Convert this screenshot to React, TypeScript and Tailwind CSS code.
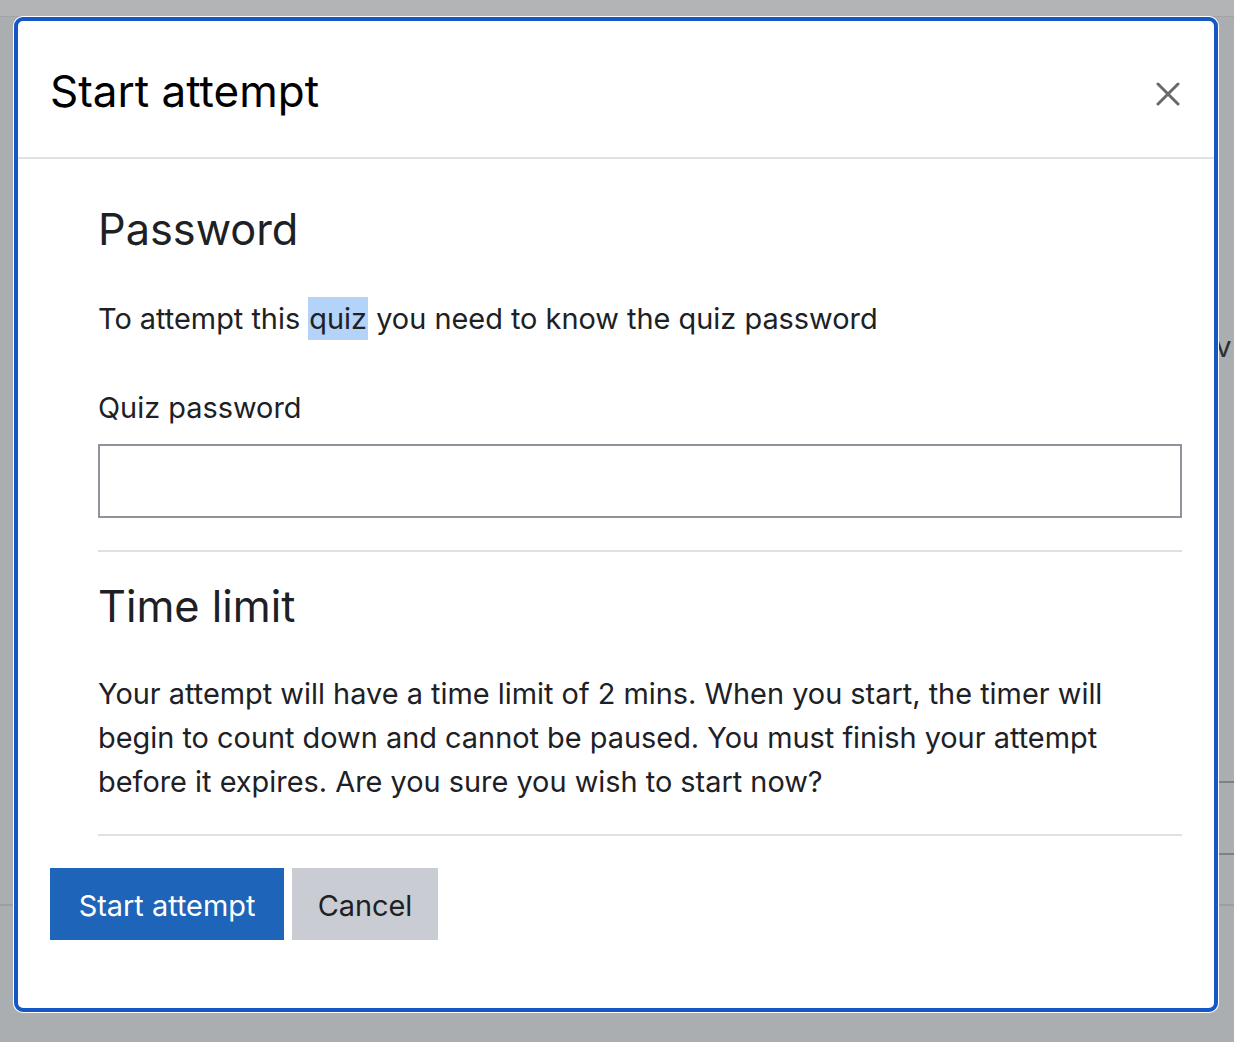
import React from "react";

function CloseIcon() {
  return (
    <svg width="24" height="24" viewBox="0 0 24 24" fill="none">
      <path d="M2 2 L22 22 M22 2 L2 22" stroke="#666a6d" strokeWidth="3" strokeLinecap="round" />
    </svg>
  );
}

export default function App() {
  return (
    <div className="relative w-[1234px] h-[1042px] overflow-hidden bg-[#abaeb1] font-[Inter,'Noto_Sans',sans-serif]">
      {/* backdrop page remnants */}
      <div className="absolute left-0 top-0 w-full h-[17px] bg-[#b2b4b6] border-b border-[#a2a5a8]" />
      <div className="absolute left-[1200px] top-[325px] text-[29px] leading-[44px] text-[#2a2e32]">sv</div>
      <div className="absolute left-[1200px] top-[781px] w-[40px] h-[2px] bg-[#7d8084]" />
      <div className="absolute left-[1200px] top-[853px] w-[40px] h-[2px] bg-[#7d8084]" />
      <div className="absolute left-[1200px] top-[904px] w-[40px] h-[2px] bg-[#9c9fa2]" />
      <div className="absolute left-0 top-[904px] w-[20px] h-[2px] bg-[#9c9fa2]" />

      <div className="relative z-10 pl-[13px] pt-[16px]">
        <div className="w-[1206px] h-[997px] rounded-[10px] bg-white p-[1px]">
          <div className="h-full rounded-[9px] border-4 border-[#1558c5] bg-white flex flex-col">
            <div className="h-[138px] border-b-2 border-[#dee2e6] flex items-center justify-between pl-[32px] pr-[34px]">
              <h5 className="text-[44px] leading-[53px] text-black mt-[4px]">Start attempt</h5>
              <div className="mt-[10px]">
                <CloseIcon />
              </div>
            </div>
            <div className="px-[32px]">
              <div className="ml-[48px]">
                <h3 className="mt-[44px] text-[43.3px] leading-[53px] text-[#1d2125]">Password</h3>
                <p className="mt-[41px] text-[28.9px] leading-[44px] text-[#1d2125]">
                  To attempt this <span className="inline-block h-[43px] bg-[#b3d3f9] px-[1px]">quiz</span> you need to know the quiz password
                </p>
                <label className="block mt-[45px] text-[28.9px] leading-[44px] text-[#1d2125]">Quiz password</label>
                <input
                  type="password"
                  className="block mt-[14px] w-full h-[74px] border-2 border-[#8f949b] bg-white outline-none"
                />
                <div className="mt-[32px] h-[2px] bg-[#dee2e6]" />
                <h3 className="mt-[28px] text-[43.3px] leading-[53px] text-[#1d2125]">Time limit</h3>
                <p className="mt-[39px] text-[28.9px] leading-[44px] text-[#1d2125]">
                  Your attempt will have a time limit of 2 mins. When you start, the timer will
                  <br />
                  begin to count down and cannot be paused. You must finish your attempt
                  <br />
                  before it expires. Are you sure you wish to start now?
                </p>
                <div className="mt-[30px] h-[2px] bg-[#dee2e6]" />
              </div>
              <div className="mt-[32px] flex gap-[8px]">
                <button className="h-[72px] w-[234px] pt-[3px] bg-[#1e64b8] text-white text-[28.9px] leading-[44px]">
                  Start attempt
                </button>
                <button className="h-[72px] w-[146px] pt-[3px] bg-[#c9cdd3] text-[#1d2125] text-[28.9px] leading-[44px]">
                  Cancel
                </button>
              </div>
            </div>
          </div>
        </div>
      </div>
    </div>
  );
}
